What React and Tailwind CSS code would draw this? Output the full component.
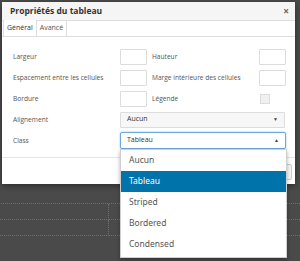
const Label = ({ w, pad, children }) => (
  <span className={`${w} ${pad} whitespace-nowrap text-[6.6px] text-[#555]`}>{children}</span>
)

const Box = () => <div className="w-[27px] h-[16px] bg-white border border-[#dcdcdc] rounded-[1px]" />

const options = ['Aucun', 'Tableau', 'Striped', 'Bordered', 'Condensed']

export default function App() {
  return (
    <div className="relative w-[300px] h-[261px] overflow-hidden bg-[#4a4a4a] font-['Open_Sans',sans-serif]">
      {/* Editor content behind the modal */}
      <div className="pt-[203px] -ml-[6px] w-[330px]">
        <div className="grid grid-cols-[115px_1fr] border-t border-dotted border-[#6e6e6e]">
          <div className="h-[16px] border-r border-b border-dotted border-[#6e6e6e]" />
          <div className="h-[16px] border-b border-dotted border-[#6e6e6e]" />
          <div className="h-[16px] border-r border-b border-dotted border-[#6e6e6e]" />
          <div className="h-[16px] border-b border-dotted border-[#6e6e6e]" />
        </div>
      </div>

      {/* Dialog */}
      <div className="absolute top-[2px] left-[2px] w-[293px] h-[182px] bg-white shadow-[0_2px_6px_rgba(0,0,0,0.4)] flex flex-col">
        <div className="h-[19px] flex items-center justify-between bg-[#f5f5f5] border-b border-[#dedede] pl-[8px] pr-[6px]">
          <span className="text-[8.5px] font-bold text-[#333]">Propriétés du tableau</span>
          <span className="text-[10px] font-bold leading-none text-[#666]">×</span>
        </div>
        <div className="h-[16px] flex items-end bg-white border-b border-[#dedede] pl-[1px]">
          <div className="h-[16px] px-[3px] flex items-center bg-white border-x border-[#dedede] text-[7px] text-[#333]">Général</div>
          <div className="h-[16px] px-[3px] flex items-center border-r border-[#dedede] text-[7px] text-[#555]">Avancé</div>
        </div>
        <div className="pt-[9px] flex">
          <div className="flex flex-col">
            <div className="flex items-center h-[21px]"><Label w="w-[118px]" pad="pl-[11px]">Largeur</Label><Box /></div>
            <div className="flex items-center h-[21px]"><Label w="w-[118px]" pad="pl-[11px]">Espacement entre les cellules</Label><Box /></div>
            <div className="flex items-center h-[21px]"><Label w="w-[118px]" pad="pl-[11px]">Bordure</Label><Box /></div>
          </div>
          <div className="flex flex-col ml-[5px]">
            <div className="flex items-center h-[21px]"><Label w="w-[107px]">Hauteur</Label><Box /></div>
            <div className="flex items-center h-[21px]"><Label w="w-[107px]">Marge intérieure des cellules</Label><Box /></div>
            <div className="flex items-center h-[21px]">
              <Label w="w-[108px]">Légende</Label>
              <div className="w-[10px] h-[10px] bg-[#f0f0f0] border border-[#dcdcdc]" />
            </div>
          </div>
        </div>
        <div className="flex items-center h-[21px]">
          <Label w="w-[118px]" pad="pl-[11px]">Alignement</Label>
          <div className="w-[165px] h-[16px] flex items-center justify-between px-[6px] bg-[#f7f7f7] border border-[#dcdcdc] rounded-[1px]">
            <span className="text-[7px] text-[#333]">Aucun</span>
            <span className="text-[5px] text-[#444]">▼</span>
          </div>
        </div>
        <div className="flex items-center h-[21px]">
          <Label w="w-[118px]" pad="pl-[11px]">Class</Label>
          <div className="w-[166px] h-[17px] flex items-center justify-between px-[6px] bg-white border border-[#6fa6dc] rounded-[2px] shadow-[0_0_2px_rgba(30,140,190,0.5)]">
            <span className="text-[7px] text-[#333]">Tableau</span>
            <span className="text-[5px] text-[#444]">▲</span>
          </div>
        </div>
        <div className="mt-[6px] flex-1 border-t border-[#e5e5e5] flex items-start justify-end pt-[6px] pr-[3px]">
          <div className="h-[16px] w-[30px] border border-[#ccc] bg-[#f7f7f7] rounded-[2px]" />
        </div>
      </div>

      {/* Open select menu */}
      <div className="absolute top-[149px] left-[120px] w-[167px] h-[109px] bg-white border border-[#cfcfcf] shadow-[0_2px_4px_rgba(0,0,0,0.3)] font-['Noto_Sans',sans-serif]">
        {options.map((o) => (
          <div
            key={o}
            className={`h-[21px] flex items-center pl-[8px] text-[8.5px] ${o === 'Tableau' ? 'bg-[#0073aa] text-white' : 'text-[#555]'}`}
          >
            {o}
          </div>
        ))}
      </div>
    </div>
  )
}
